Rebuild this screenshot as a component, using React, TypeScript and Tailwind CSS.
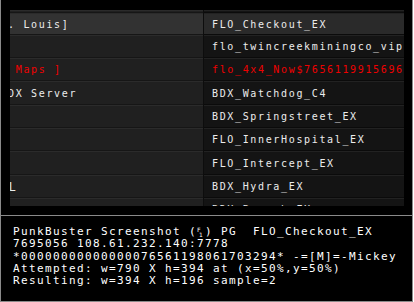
import React from "react";

type Cell = { text: string; red?: boolean; sans?: boolean };

// row heights: bottom of the row above, then the visible rows
const heights = [3, 22, 23, 23, 24, 23, 23, 24, 23, 23];

const leftCells: Cell[] = [
  { text: "" },
  { text: "=FLO= [St. Louis]" },
  { text: "" },
  { text: "[ All BF2 Maps ]", red: true },
  { text: "=[UBER] BDX Server" },
  { text: "" },
  { text: "" },
  { text: "" },
  { text: "L", sans: true },
  { text: "" },
];

const rightCells: Cell[] = [
  { text: "" },
  { text: "FLO_Checkout_EX" },
  { text: "flo_twincreekminingco_vip" },
  { text: "flo_4x4_Now$765611991569663", red: true },
  { text: "BDX_Watchdog_C4" },
  { text: "BDX_Springstreet_EX" },
  { text: "FLO_InnerHospital_EX" },
  { text: "FLO_Intercept_EX" },
  { text: "BDX_Hydra_EX" },
  { text: "BDX_Breach_EX" },
];

const tableFont = "font-['DejaVu_Sans_Mono',monospace] text-[10px] tracking-[1.65px]";

function Column({ cells, side }: { cells: Cell[]; side: "left" | "right" }) {
  return (
    <div
      className={
        side === "left"
          ? "w-[193px] flex flex-col overflow-hidden"
          : "flex-1 flex flex-col overflow-hidden border-l border-[#0d0d0d]"
      }
    >
      {cells.map((cell, i) => {
        const selected = i === 1;
        let bg = side === "left" ? "bg-[#202020]" : "bg-[#141414]";
        if (selected) bg = side === "left" ? "bg-[#323232]" : "bg-[#2a2a2a]";
        return (
          <div
            key={i}
            style={{ height: heights[i] }}
            className={`shrink-0 flex items-center whitespace-nowrap overflow-hidden border-t border-b ${bg} ${
              side === "left" ? "border-t-[#2b2b2b] border-b-[#161616]" : "border-t-[#222222] border-b-[#0b0b0b]"
            }`}
          >
            {cell.text && (
              <span
                className={`${
                  cell.sans
                    ? "font-['Liberation_Sans',sans-serif] text-[12px] ml-[-1px]"
                    : `${tableFont} ${side === "left" ? "ml-[-71px]" : "ml-[8px]"}`
                } ${cell.red ? "text-[#f00000]" : "text-[#ececec]"}`}
              >
                {cell.text}
              </span>
            )}
          </div>
        );
      })}
    </div>
  );
}

export default function App() {
  return (
    <div className="w-[413px] h-[302px] bg-black border-x border-[#8a8a8a] flex flex-col">
      {/* captured picture */}
      <div className="h-[215px] shrink-0 pt-[10px] pl-[9px]">
        <div className="w-[394px] h-[196px] overflow-hidden flex">
          <Column cells={leftCells} side="left" />
          <Column cells={rightCells} side="right" />
        </div>
      </div>

      {/* PunkBuster info */}
      <div className="flex-1 border-t border-b border-[#8a8a8a] pt-[10px] pl-[12px] font-['DejaVu_Sans_Mono',monospace] text-[11px] leading-[12.3px] tracking-[1.38px] text-white whitespace-pre">
        <div>
          PunkBuster Screenshot (
          <span className="inline-flex flex-col w-[8px] align-top leading-[5px] text-[6px] tracking-normal pt-[1px]">
            <span>F</span>
            <span className="pl-[2px]">1</span>
          </span>
          ) PG  FLO_Checkout_EX
        </div>
        <div>7695056 108.61.232.140:7778</div>
        <div>*00000000000000076561198061703294* -=[M]=-Mickey</div>
        <div>Attempted: w=790 X h=394 at (x=50%,y=50%)</div>
        <div>Resulting: w=394 X h=196 sample=2</div>
      </div>
    </div>
  );
}
